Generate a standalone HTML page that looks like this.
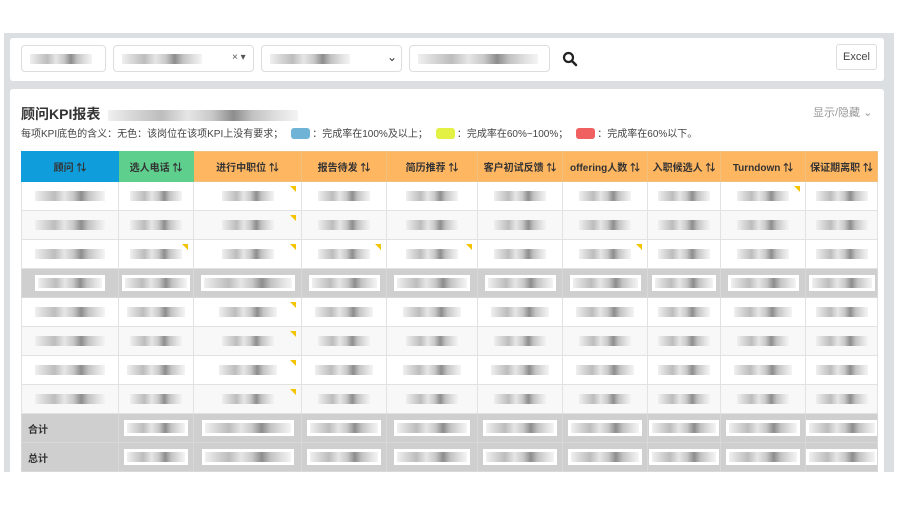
<!DOCTYPE html>
<html><head><meta charset="utf-8"><style>
*{margin:0;padding:0;box-sizing:border-box}
body{width:900px;height:508px;background:#fff;font-family:"Liberation Sans","Noto Sans CJK SC",sans-serif;position:relative;overflow:hidden}
.frame{position:absolute;left:4px;top:33px;width:890px;height:439px;background:#dcdfe2}
.card1{position:absolute;left:10px;top:38px;width:874px;height:43px;background:#fff;border-radius:3px}
.card2{position:absolute;left:10px;top:89px;width:874px;height:383px;background:#fff;border-radius:3px 3px 0 0}
.sel{position:absolute;top:45px;height:27px;border:1px solid #ddd;border-radius:4px;background:#fff}
.sel .b{position:absolute;left:8px;top:8px}
.b{display:inline-block;width:70px;height:10px;background:linear-gradient(90deg,#f0f0f0 0,#d9d9d9 12%,#bdbdbd 28%,#e6e6e6 42%,#c8c8c8 55%,#8d8d8d 66%,#c2c2c2 76%,#e2e2e2 90%,#f4f4f4 100%);vertical-align:middle}
.excel{position:absolute;left:836px;top:44px;width:41px;height:26px;border:1px solid #ddd;border-radius:3px;font-size:11px;color:#444;text-align:center;line-height:24px}
.title{position:absolute;left:21px;top:104px;font-size:14px;font-weight:bold;color:#333}
.legend{position:absolute;left:21px;top:125px;font-size:10px;color:#444;white-space:nowrap}
.sw{display:inline-block;width:19px;height:11px;border-radius:3px;vertical-align:-2px;margin:0 2px 0 8px}
.show{position:absolute;left:813px;top:104px;font-size:11px;color:#999}
table{position:absolute;left:21px;top:151px;border-collapse:collapse;table-layout:fixed;width:856px;font-size:10px}
td,th{border:1px solid #e2e2e2;height:29px;text-align:center;position:relative;overflow:hidden}
th{background:#ffb661;color:#333;font-weight:600;font-size:10px;height:30px;border-color:#f0c080;white-space:nowrap}
th.c0{background:#0f9ddc;border-color:#0f9ddc}
th.c1{background:#5fcf8e;border-color:#5fcf8e}
tr.alt td{background:#f8f8f8}
tr.g td{background:#cfcfcf;border-color:#d8d8d8}
tr.g .b{background-color:#fff;box-shadow:0 0 0 3px #fff}
.t:after{content:"";position:absolute;right:5px;top:4px;border-left:6px solid transparent;border-top:6px solid #f5c400}
.lb{text-align:left;padding-left:6px;font-weight:bold;color:#333}
</style></head><body>
<div class="frame"></div>
<div class="card1"></div>
<div class="card2"></div>
<div class="sel" style="left:21px;width:85px"><i class="b" style="width:62px"></i></div>
<div class="sel" style="left:113px;width:141px"><i class="b" style="width:80px"></i><span style="position:absolute;left:118px;top:6px;font-size:10px;color:#555">× ▾</span></div>
<div class="sel" style="left:261px;width:141px"><i class="b" style="width:80px"></i><span style="position:absolute;left:125px;top:4px;font-size:12px;color:#333">⌄</span></div>
<div class="sel" style="left:409px;width:141px"><i class="b" style="width:120px"></i></div>
<svg style="position:absolute;left:562px;top:51px" width="16" height="16" viewBox="0 0 16 16"><circle cx="6.5" cy="6.5" r="4.5" fill="none" stroke="#222" stroke-width="2.2"/><path d="M10 10l4 4" stroke="#222" stroke-width="2.5" stroke-linecap="round"/></svg>
<div class="excel">Excel</div>
<div class="title">顾问KPI报表 <i class="b" style="width:190px;height:11px;margin-left:4px"></i></div>
<div class="show">显示/隐藏 ⌄</div>
<div class="legend">每项KPI底色的含义：无色：该岗位在该项KPI上没有要求；<span class="sw" style="background:#6fb4d6"></span>：完成率在100%及以上；<span class="sw" style="background:#e3f145"></span>：完成率在60%~100%；<span class="sw" style="background:#f06060"></span>：完成率在60%以下。</div>
<table>
<colgroup><col style="width:97px"><col style="width:75px"><col style="width:108px"><col style="width:85px"><col style="width:91px"><col style="width:85px"><col style="width:85px"><col style="width:73px"><col style="width:85px"><col style="width:72px"></colgroup>
<tr><th class="c0">顾问 ⇅</th><th class="c1">选人电话 ⇅</th><th>进行中职位 ⇅</th><th>报告待发 ⇅</th><th>简历推荐 ⇅</th><th>客户初试反馈 ⇅</th><th>offering人数 ⇅</th><th>入职候选人 ⇅</th><th>Turndown ⇅</th><th>保证期离职 ⇅</th></tr>
<tr><td><i class="b"></i></td><td><i class="b" style="width:52px"></i></td><td class="t"><i class="b" style="width:52px"></i></td><td><i class="b" style="width:52px"></i></td><td><i class="b" style="width:52px"></i></td><td><i class="b" style="width:52px"></i></td><td><i class="b" style="width:52px"></i></td><td><i class="b" style="width:52px"></i></td><td class="t"><i class="b" style="width:52px"></i></td><td><i class="b" style="width:52px"></i></td></tr>
<tr class="alt"><td><i class="b"></i></td><td><i class="b" style="width:52px"></i></td><td class="t"><i class="b" style="width:52px"></i></td><td><i class="b" style="width:52px"></i></td><td><i class="b" style="width:52px"></i></td><td><i class="b" style="width:52px"></i></td><td><i class="b" style="width:52px"></i></td><td><i class="b" style="width:52px"></i></td><td><i class="b" style="width:52px"></i></td><td><i class="b" style="width:52px"></i></td></tr>
<tr><td><i class="b"></i></td><td class="t"><i class="b" style="width:52px"></i></td><td class="t"><i class="b" style="width:52px"></i></td><td class="t"><i class="b" style="width:52px"></i></td><td class="t"><i class="b" style="width:52px"></i></td><td><i class="b" style="width:52px"></i></td><td class="t"><i class="b" style="width:52px"></i></td><td><i class="b" style="width:52px"></i></td><td><i class="b" style="width:52px"></i></td><td><i class="b" style="width:52px"></i></td></tr>
<tr class="g"><td><i class="b" style="width:64px"></i></td><td><i class="b" style="width:62px"></i></td><td><i class="b" style="width:88px"></i></td><td><i class="b" style="width:65px"></i></td><td><i class="b" style="width:70px"></i></td><td><i class="b" style="width:65px"></i></td><td><i class="b" style="width:65px"></i></td><td><i class="b" style="width:58px"></i></td><td><i class="b" style="width:65px"></i></td><td><i class="b" style="width:60px"></i></td></tr>
<tr><td><i class="b"></i></td><td><i class="b" style="width:58px"></i></td><td class="t"><i class="b" style="width:58px"></i></td><td><i class="b" style="width:58px"></i></td><td><i class="b" style="width:58px"></i></td><td><i class="b" style="width:58px"></i></td><td><i class="b" style="width:58px"></i></td><td><i class="b" style="width:52px"></i></td><td><i class="b" style="width:58px"></i></td><td><i class="b" style="width:52px"></i></td></tr>
<tr class="alt"><td><i class="b"></i></td><td><i class="b" style="width:52px"></i></td><td class="t"><i class="b" style="width:52px"></i></td><td><i class="b" style="width:52px"></i></td><td><i class="b" style="width:52px"></i></td><td><i class="b" style="width:52px"></i></td><td><i class="b" style="width:52px"></i></td><td><i class="b" style="width:52px"></i></td><td><i class="b" style="width:52px"></i></td><td><i class="b" style="width:52px"></i></td></tr>
<tr><td><i class="b"></i></td><td><i class="b" style="width:58px"></i></td><td class="t"><i class="b" style="width:58px"></i></td><td><i class="b" style="width:58px"></i></td><td><i class="b" style="width:58px"></i></td><td><i class="b" style="width:58px"></i></td><td><i class="b" style="width:58px"></i></td><td><i class="b" style="width:52px"></i></td><td><i class="b" style="width:58px"></i></td><td><i class="b" style="width:52px"></i></td></tr>
<tr class="alt"><td><i class="b"></i></td><td><i class="b" style="width:52px"></i></td><td class="t"><i class="b" style="width:52px"></i></td><td><i class="b" style="width:52px"></i></td><td><i class="b" style="width:52px"></i></td><td><i class="b" style="width:52px"></i></td><td><i class="b" style="width:52px"></i></td><td><i class="b" style="width:52px"></i></td><td><i class="b" style="width:52px"></i></td><td><i class="b" style="width:52px"></i></td></tr>
<tr class="g"><td class="lb">合计</td><td><i class="b" style="width:58px"></i></td><td><i class="b" style="width:86px"></i></td><td><i class="b" style="width:68px"></i></td><td><i class="b" style="width:70px"></i></td><td><i class="b" style="width:68px"></i></td><td><i class="b" style="width:68px"></i></td><td><i class="b" style="width:64px"></i></td><td><i class="b" style="width:68px"></i></td><td><i class="b" style="width:66px"></i></td></tr>
<tr class="g"><td class="lb">总计</td><td><i class="b" style="width:58px"></i></td><td><i class="b" style="width:86px"></i></td><td><i class="b" style="width:68px"></i></td><td><i class="b" style="width:70px"></i></td><td><i class="b" style="width:68px"></i></td><td><i class="b" style="width:68px"></i></td><td><i class="b" style="width:64px"></i></td><td><i class="b" style="width:68px"></i></td><td><i class="b" style="width:66px"></i></td></tr>
</table>
</body></html>
